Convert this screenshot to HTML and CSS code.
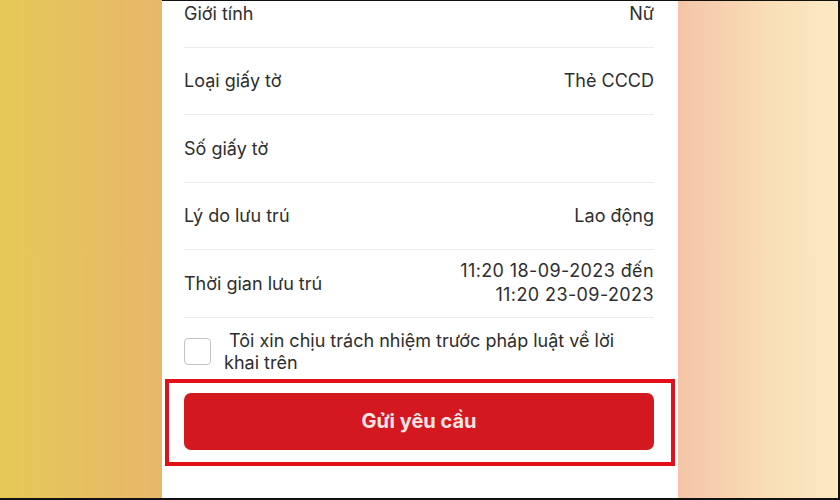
FILE: index.html
```html
<!DOCTYPE html>
<html lang="vi">
<head>
    <meta charset="UTF-8">
    <meta name="viewport" content="width=device-width, initial-scale=1.0">
    <title>Khai báo lưu trú</title>
    <link rel="stylesheet" href="styles.css">
</head>
<body>

<div class="screen">
    <div class="side side-left"></div>

    <div class="panel">
        <div class="info-list">
            <div class="info-row">
                <span class="label">Giới tính</span>
                <span class="value">Nữ</span>
            </div>
            <div class="info-row">
                <span class="label">Loại giấy tờ</span>
                <span class="value">Thẻ CCCD</span>
            </div>
            <div class="info-row">
                <span class="label">Số giấy tờ</span>
                <span class="value"></span>
            </div>
            <div class="info-row">
                <span class="label">Lý do lưu trú</span>
                <span class="value">Lao động</span>
            </div>
            <div class="info-row">
                <span class="label">Thời gian lưu trú</span>
                <span class="value value-multi">11:20 18-09-2023 đến<br>11:20 23-09-2023</span>
            </div>
        </div>

        <label class="agree">
            <input type="checkbox" class="agree-box">
            <span class="agree-text">&nbsp;Tôi xin chịu trách nhiệm trước pháp luật về lời<br>khai trên</span>
        </label>

        <div class="highlight">
            <button class="submit">Gửi yêu cầu</button>
        </div>
    </div>

    <div class="side side-right"></div>
</div>

</body>
</html>
```

FILE: styles.css
```css
body {
    margin: 0;
    font-family: Inter, "Liberation Sans", Arial, sans-serif;
    color: #2e2e2e;
}

.screen {
    display: flex;
    width: 840px;
    height: 500px;
    box-sizing: border-box;
    border-right: 2px solid #111;
    border-bottom: 2px solid #111;
    overflow: hidden;
}

.side {
    width: 162px;
    flex-shrink: 0;
}

.side-left {
    background: linear-gradient(to right, #e5c957, #e8b76b);
}

.side-right {
    width: 160px;
    border-top: 1px solid #111;
    background: linear-gradient(to right, #f4c5a7, #f9dfb8 60%, #fbe9c2);
}

.panel {
    width: 516px;
    flex-shrink: 0;
    background-color: #fff;
    border-top: 1px solid #111;
    box-sizing: border-box;
    padding: 0 24px 0 22px;
}

.info-list {
    margin-top: -21px;
}

.info-row {
    display: flex;
    align-items: center;
    justify-content: space-between;
    height: 67.5px;
    box-sizing: border-box;
    border-bottom: 1px solid #ececec;
    font-size: 18px;
}

.value {
    text-align: right;
}

.value-multi {
    line-height: 24px;
    letter-spacing: 0.4px;
}

.agree {
    display: flex;
    align-items: center;
    padding-top: 12px;
    font-size: 18px;
    line-height: 22px;
}

.agree-box {
    appearance: none;
    width: 27px;
    height: 27px;
    margin: 0 13px 0 0;
    border: 1.5px solid #c4c4c4;
    border-radius: 4px;
    background-color: #fff;
    flex-shrink: 0;
}

.highlight {
    margin: 5px -21px 0 -19px;
    border: 4px solid #e1101a;
    padding: 10px 17px 12px 15px;
}

.submit {
    display: block;
    width: 100%;
    height: 57px;
    background-color: #d3191f;
    color: #fde4e4;
    border: none;
    border-radius: 7px;
    font-family: Inter, "Liberation Sans", Arial, sans-serif;
    font-size: 20px;
    font-weight: bold;
    cursor: pointer;
}
```
